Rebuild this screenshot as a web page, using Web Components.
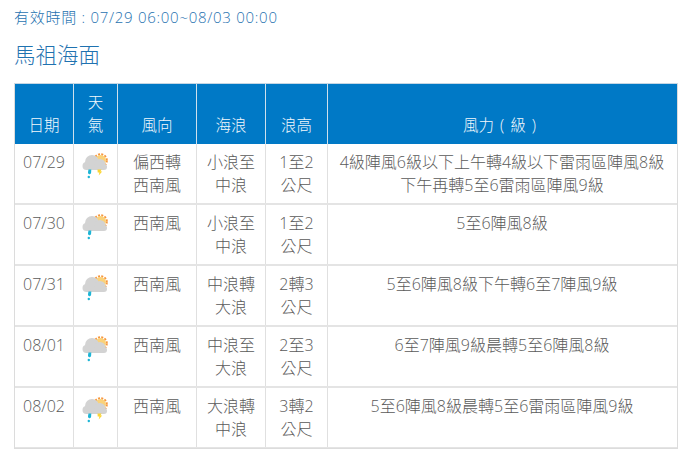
<!DOCTYPE html>
<html lang="zh-Hant">
<head>
<meta charset="utf-8">
<title>馬祖海面</title>
<style>
	html, body { margin: 0; padding: 0; background: #fff; }
	body { font-family: "Open Sans", "Noto Sans CJK TC", sans-serif; font-weight: 300; }
</style>
</head>
<body>
<sea-forecast></sea-forecast>

<script>
class WeatherIcon extends HTMLElement {
	constructor() {
		super();
		this.attachShadow({ mode: "open" });
		const thunder = this.getAttribute("thunder") !== null;
		const bolt = thunder ? `<path d="M16.500 17.500h4l-1 2h1.700l-3.500 4 .7-3h-1.700z" fill="#fbd535"/>` : "";
		this.shadowRoot.innerHTML = `
		<style>
			:host { display: block; width: 28px; height: 28px; margin: 0 auto; }
			svg { display: block; filter: blur(.3px); }
		</style>
		<svg width="28" height="28" viewBox="0 0 28 28">
			<circle cx="19.500" cy="8.500" r="6.300" fill="none" stroke="#f7963c" stroke-width="2" stroke-dasharray="2 1.300"/>
			<circle cx="19.500" cy="8.500" r="5.500" fill="#fad27a"/>
			<g fill="#d3d3d3">
				<circle cx="11" cy="10" r="7"/>
				<circle cx="19" cy="12.500" r="5.500"/>
				<circle cx="23" cy="15" r="3"/>
				<circle cx="5.500" cy="14" r="4"/>
				<rect x="5" y="13" width="18" height="5"/>
			</g>
			<path d="M7.500 17.500h2.800l-.2 3.300a1.600 1.600 0 1 1-3.100-.7z" fill="#1db5d6"/>
			<circle cx="7.800" cy="25" r="1.200" fill="#1db5d6"/>
			${bolt}
		</svg>
		`;
	}
}

class ForecastRow extends HTMLElement {
	constructor() {
		super();
		this.attachShadow({ mode: "open" });
		const a = (n) => this.getAttribute(n) || "";
		const icon = this.getAttribute("thunder") !== null ? "<weather-icon thunder></weather-icon>" : "<weather-icon></weather-icon>";
		this.shadowRoot.innerHTML = `
		<style>
			:host {
				display: grid;
				grid-template-columns: var(--cols);
				border-bottom: 2px solid #e4e4e4;
				color: #5a5a5a;
				font-size: 16px;
				line-height: 23px;
				text-align: center;
			}
			:host(:last-child) { border-bottom-width: 1px; }
			div {
				padding: 7px 3px 6px;
				border-right: 1px solid #e0e0e0;
			}
			div:last-child { border-right: 0; padding-right: 4px; }
			.icon { padding: 8px 2px 0 0; }
		</style>
		<div>${a("date")}</div>
		<div class="icon">${icon}</div>
		<div>${a("wind")}</div>
		<div>${a("wave")}</div>
		<div>${a("height")}</div>
		<div>${a("force")}</div>
		`;
	}
}

class SeaForecast extends HTMLElement {
	constructor() {
		super();
		this.attachShadow({ mode: "open" });
		const rows = [
			["07/29", true, "偏西轉<br>西南風", "小浪至<br>中浪", "1至2<br>公尺", "4級陣風6級以下上午轉4級以下雷雨區陣風8級<br>下午再轉5至6雷雨區陣風9級"],
			["07/30", false, "西南風", "小浪至<br>中浪", "1至2<br>公尺", "5至6陣風8級"],
			["07/31", false, "西南風", "中浪轉<br>大浪", "2轉3<br>公尺", "5至6陣風8級下午轉6至7陣風9級"],
			["08/01", false, "西南風", "中浪至<br>大浪", "2至3<br>公尺", "6至7陣風9級晨轉5至6陣風8級"],
			["08/02", true, "西南風", "大浪轉<br>中浪", "3轉2<br>公尺", "5至6陣風8級晨轉5至6雷雨區陣風9級"],
		];
		const body = rows.map((r) => `
			<forecast-row date="${r[0]}" ${r[1] ? "thunder" : ""} wind="${r[2]}" wave="${r[3]}" height="${r[4]}" force="${r[5]}"></forecast-row>
		`).join("");
		this.shadowRoot.innerHTML = `
		<style>
			:host {
				display: block;
				padding: 7px 22px 0 14px;
				--cols: 59px 44px 79px 69px 62px 1fr;
			}
			.valid { color: #1f72b0; font-size: 15px; line-height: 20px; letter-spacing: .72px; }
			h2 { margin: 14px 0 15px; color: #1f72b0; font-size: 21.500px; line-height: 27px; font-weight: 300; }
			.table { border: 1px solid #dcdcdc; border-top-color: #c4d6e4; }
			.head {
				display: grid;
				grid-template-columns: var(--cols);
				background: #0079c6;
				color: #f2f8fc;
				font-size: 15.500px;
				line-height: 23px;
				text-align: center;
			}
			.head div {
				display: flex;
				align-items: flex-end;
				justify-content: center;
				padding: 7px 3px 7px;
				border-right: 1px solid #cfe0ec;
				word-spacing: 2px;
			}
			.head div:last-child { border-right: 0; padding-right: 9px; }
		</style>
		<div class="valid">有效時間 : 07/29 06:00~08/03 00:00</div>
		<h2>馬祖海面</h2>
		<div class="table">
			<div class="head">
				<div>日期</div><div>天<br>氣</div><div>風向</div><div>海浪</div><div>浪高</div><div>風力 ( 級 )</div>
			</div>
			${body}
		</div>
		`;
	}
}

customElements.define("weather-icon", WeatherIcon);
customElements.define("forecast-row", ForecastRow);
customElements.define("sea-forecast", SeaForecast);
</script>
</body>
</html>
